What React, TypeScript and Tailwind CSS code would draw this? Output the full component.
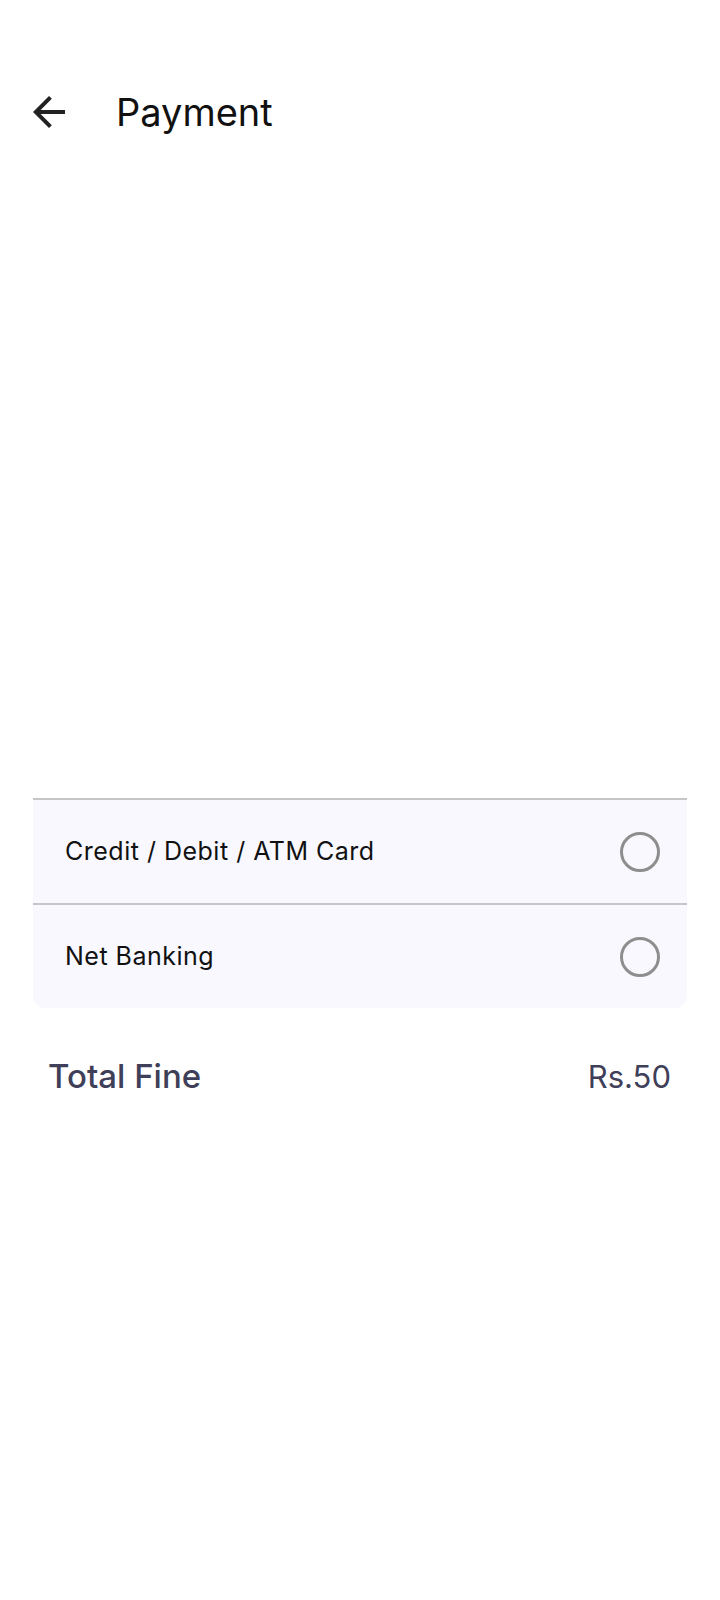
import React from "react";

const ArrowBack = () => (
  <svg viewBox="0 0 24 24" className="w-12 h-12" fill="#222222">
    <path d="M20 11H7.83l5.59-5.59L12 4l-8 8 8 8 1.41-1.41L7.83 13H20v-2z" />
  </svg>
);

const Radio = () => (
  <div className="w-10 h-10 rounded-full border-[3px] border-[#8e8e8e]" />
);

const options = ["Credit / Debit / ATM Card", "Net Banking"];

const App = () => {
  return (
    <div
      className="w-full min-h-[1600px] bg-white flex flex-col"
      style={{ fontFamily: "Inter, 'Noto Sans', sans-serif" }}
    >
      <div className="flex items-center pl-[25px] gap-[43px] mt-[88px] h-12">
        <ArrowBack />
        <h1 className="text-[38px] leading-none text-[#111111]">Payment</h1>
      </div>

      <div className="h-[662px]" />

      <div className="mx-[33px] rounded-b-xl bg-[#f8f8fe] overflow-hidden">
        {options.map((o) => (
          <div key={o}>
            <div className="h-[2px] bg-[#c6c6c8]" />
            <div className="h-[103px] flex items-center justify-between pl-[32px] pr-[27px]">
              <span className="text-[25px] leading-none tracking-[0.5px] text-[#111111]">{o}</span>
              <Radio />
            </div>
          </div>
        ))}
      </div>

      <div className="flex items-center justify-between pl-[48px] pr-[49px] mt-[52px]">
        <span className="text-[33px] leading-none font-medium text-[#3f3f5a]">Total Fine</span>
        <span className="text-[31px] leading-none text-[#3f3f5a]">Rs.50</span>
      </div>
    </div>
  );
};

export default App;
